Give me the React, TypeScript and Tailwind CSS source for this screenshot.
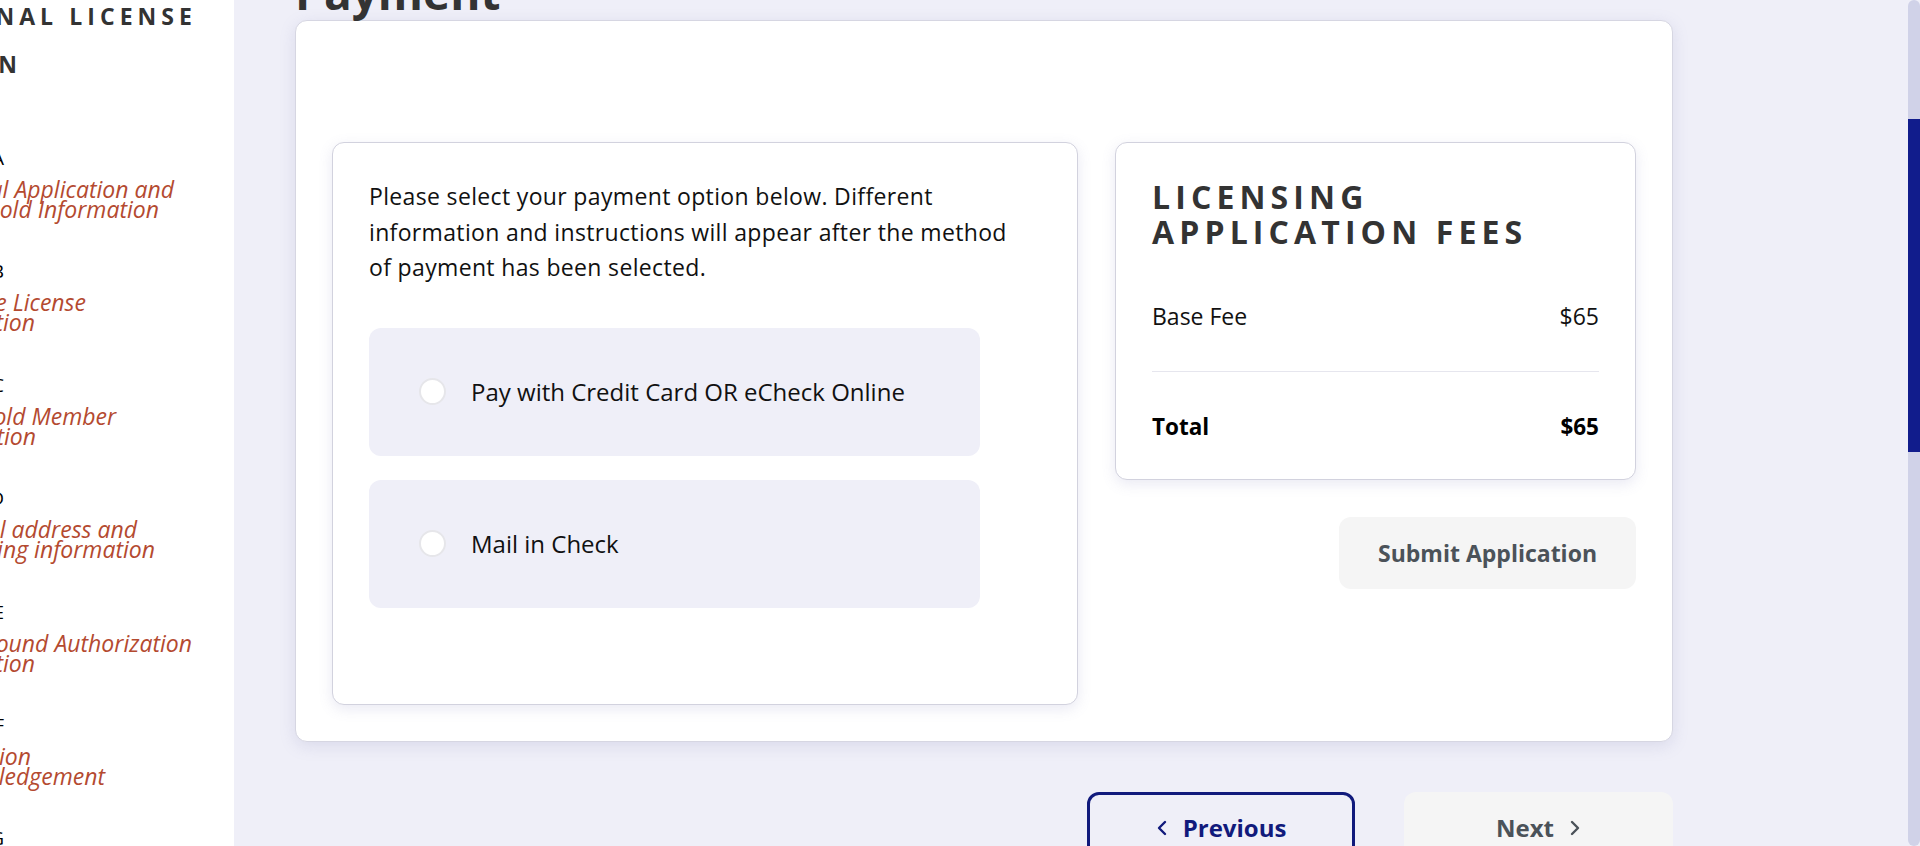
import React from "react";

const titleLines = [
  { text: "ORIGINAL LICENSE", end: "w-[197px]" },
  { text: "APPLICATION", end: "w-[22px]" },
];

const steps = [
  { letter: "STEP A", lines: [{ t: "Original Application and", w: "w-[174px]" }, { t: "Household Information", w: "w-[159px]" }] },
  { letter: "STEP B", lines: [{ t: "Child Care License", w: "w-[86px]" }, { t: "Information", w: "w-[35px]" }] },
  { letter: "STEP C", lines: [{ t: "Household Member", w: "w-[116px]" }, { t: "Information", w: "w-[36px]" }] },
  { letter: "STEP D", lines: [{ t: "Physical address and", w: "w-[137px]" }, { t: "Mailing information", w: "w-[155px]" }] },
  { letter: "STEP E", lines: [{ t: "Background Authorization", w: "w-[192px]" }, { t: "Information", w: "w-[35px]" }] },
  { letter: "STEP F", lines: [{ t: "Certification", w: "w-[31px]" }, { t: "Acknowledgement", w: "w-[105px]" }] },
  { letter: "STEP G", lines: [{ t: "Review", w: "w-[60px]" }, { t: "Payment", w: "w-[80px]" }] },
];

const options = ["Pay with Credit Card OR eCheck Online", "Mail in Check"];

function Sidebar() {
  return (
    <aside className="w-[234px] shrink-0 bg-white overflow-hidden">
      <div className="-mt-[8px]">
        {titleLines.map((l) => (
          <div key={l.text} className={`${l.end} flex justify-end whitespace-nowrap text-[23px] leading-[48px] font-bold tracking-[0.22em] text-[#333]`}>
            <span>{l.text}</span>
          </div>
        ))}
      </div>
      <div className="mt-[58px]">
        {steps.map((s) => (
          <div key={s.letter} className="h-[113.4px]">
            <div className="w-[6px] flex justify-end whitespace-nowrap text-[19px] leading-[24px] tracking-[0.1em] text-black">
              <span>{s.letter}</span>
            </div>
            <div className="mt-[9px]">
              {s.lines.map((l) => (
                <div key={l.t} className={`${l.w} flex justify-end whitespace-nowrap text-[23px] leading-[20px] italic text-[#b44a30]`}>
                  <span>{l.t}</span>
                </div>
              ))}
            </div>
          </div>
        ))}
      </div>
    </aside>
  );
}

function Chevron({ dir }: { dir: "left" | "right" }) {
  return (
    <svg width="12" height="18" viewBox="0 0 12 18" fill="none" stroke="currentColor" strokeWidth="2.4" strokeLinecap="round" strokeLinejoin="round">
      {dir === "left" ? <path d="M9 3 L3 9 L9 15" /> : <path d="M3 3 L9 9 L3 15" />}
    </svg>
  );
}

export default function App() {
  return (
    <div className="flex h-[846px] w-[1920px] overflow-hidden bg-[#efeff8] font-['Open_Sans',sans-serif]">
      <Sidebar />
      <main className="flex-1 overflow-hidden">
        <div className="ml-[61px] w-[1378px]">
          <h1 className="-mt-[31px] mb-[5px] text-[46px] leading-[46px] font-bold text-[#333]">Payment</h1>
          <div className="flex gap-[37px] rounded-xl border border-[#d6d6e2] bg-white px-9 pt-[121px] pb-9 shadow-[0_4px_16px_rgba(120,120,180,0.18)]">
            <section className="h-[563px] w-[746px] rounded-xl border border-[#d2d2de] bg-white p-9 shadow-[0_4px_14px_rgba(120,120,180,0.16)]">
              <p className="max-w-[656px] text-[23px] leading-[35.5px] tracking-[0.015em] text-[#111]">
                Please select your payment option below. Different information and instructions will appear after the method of payment has been selected.
              </p>
              <div className="mt-[42px] flex w-[611px] flex-col gap-6">
                {options.map((o) => (
                  <label key={o} className="flex h-[128px] items-center gap-[25px] rounded-xl bg-[#efeff8] pl-[50px]">
                    <span className="h-[27px] w-[27px] shrink-0 rounded-full border-2 border-[#e6e6ea] bg-white" />
                    <span className="text-[24px] text-[#111]">{o}</span>
                  </label>
                ))}
              </div>
            </section>
            <div className="flex w-[521px] flex-col items-end">
              <section className="w-full rounded-xl border border-[#d2d2de] bg-white px-9 pt-9 pb-[35px] shadow-[0_4px_14px_rgba(120,120,180,0.16)]">
                <h2 className="text-[32px] leading-[35px] font-bold tracking-[0.16em] text-[#333]">
                  LICENSING
                  <br />
                  APPLICATION FEES
                </h2>
                <div className="mt-[50px] flex justify-between text-[23px] leading-[35px] text-[#111]">
                  <span>Base Fee</span>
                  <span>$65</span>
                </div>
                <div className="my-[37px] h-px bg-[#e6e6ee]" />
                <div className="flex justify-between text-[22.5px] leading-[35px] font-bold text-black">
                  <span>Total</span>
                  <span>$65</span>
                </div>
              </section>
              <button className="mt-[37px] h-[72px] w-[297px] rounded-xl bg-[#f5f5f5] text-[23px] font-bold text-[#4b5259]">
                Submit Application
              </button>
            </div>
          </div>
          <div className="mt-[50px] flex justify-end gap-[49px]">
            <button className="flex h-[72px] w-[268px] items-center justify-center gap-[15px] rounded-xl border-[3px] border-[#111a7c] text-[24px] font-bold text-[#111a7c]">
              <Chevron dir="left" />
              Previous
            </button>
            <button className="flex h-[72px] w-[269px] items-center justify-center gap-[15px] rounded-xl bg-[#f5f5f5] text-[24px] font-bold text-[#4b5259]">
              Next
              <Chevron dir="right" />
            </button>
          </div>
        </div>
      </main>
      <div className="flex w-[12px] shrink-0 flex-col">
        <div className="h-[119px] rounded-t-full bg-[#d0d2e8]" />
        <div className="h-[333px] bg-[#111c8c]" />
        <div className="flex-1 rounded-b-full bg-[#d0d2e8]" />
      </div>
    </div>
  );
}
